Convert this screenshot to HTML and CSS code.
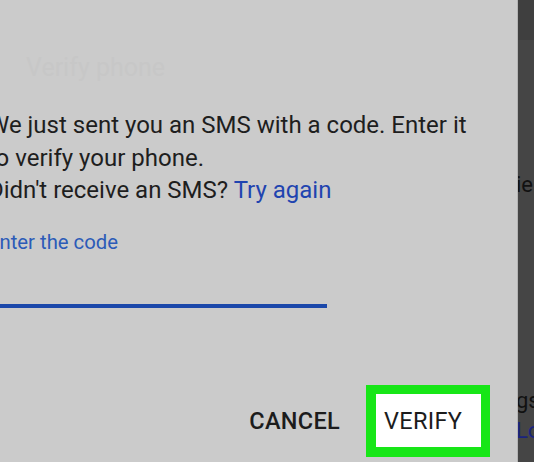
FILE: index.html
```html
<!DOCTYPE html>
<html lang="en">
<head>
  <meta charset="UTF-8" />
  <meta name="viewport" content="width=device-width, initial-scale=1" />
  <title>Verify phone</title>
  <link rel="stylesheet" href="styles.css">
</head>
<body>

<div class="screen">
  <div class="dialog">
    <div class="ghost-title">Verify phone</div>

    <div class="content">
      <p class="message">
        We just sent you an SMS with a code. Enter it<br>
        to verify your phone.<br>
        Didn't receive an SMS? <a class="link" href="#">Try again</a>
      </p>

      <label class="field-label" for="code">Enter the code</label>
      <input class="code-input" id="code" type="text" />
    </div>

    <div class="actions">
      <button class="btn">CANCEL</button>
      <div class="highlight">
        <button class="btn verify">VERIFY</button>
      </div>
    </div>
  </div>

  <div class="behind">
    <div class="behind-top"></div>
    <div class="behind-text one">ie</div>
    <div class="behind-text two">gs</div>
    <div class="behind-text three">Lo</div>
  </div>
</div>

</body>
</html>
```

FILE: styles.css
```css
body {
  margin: 0;
  font-family: Roboto, "Liberation Sans", sans-serif;
  background: #454545;
  overflow: hidden;
}

.screen {
  display: flex;
  width: 534px;
  height: 462px;
}

.dialog {
  width: 517px;
  flex-shrink: 0;
  background: #cbcbcb;
  border-right: 1px solid #b4b4b4;
  display: flex;
  flex-direction: column;
  overflow: hidden;
}

.ghost-title {
  margin: 54px 0 0 26px;
  height: 28px;
  font-size: 25px;
  line-height: 28px;
  color: #c7c7c7;
}

.content {
  margin-left: -12px;
}

.message {
  margin: 27px 0 0;
  font-size: 24px;
  line-height: 32.5px;
  color: #1e1e1e;
  white-space: nowrap;
}

.link {
  color: #1f44b0;
  text-decoration: none;
}

.field-label {
  display: block;
  margin-top: 24px;
  font-size: 20.3px;
  line-height: 22px;
  color: #2c5bb8;
}

.code-input {
  display: block;
  margin-top: 31px;
  width: 339px;
  height: 20px;
  padding: 0;
  background: transparent;
  border: none;
  border-bottom: 4px solid #1b48aa;
  outline: none;
}

.actions {
  display: flex;
  align-items: center;
  justify-content: flex-end;
  margin-top: auto;
  margin-bottom: 5px;
  padding-right: 27px;
  gap: 26px;
}

.btn {
  font-family: Roboto, "Liberation Sans", sans-serif;
  font-size: 23.5px;
  font-weight: 500;
  color: #1c1c1c;
  background: none;
  border: none;
  padding: 0;
  letter-spacing: 0.3px;
}

.verify {
  font-weight: 400;
}

.highlight {
  width: 97px;
  height: 53px;
  border: 10px solid #17e617;
  border-right-width: 9px;
  border-top-width: 9px;
  background: #ffffff;
  display: flex;
  align-items: center;
  padding-left: 8px;
  box-sizing: content-box;
}

.behind {
  flex: 1;
  display: flex;
  flex-direction: column;
  background: #454545;
  overflow: hidden;
}

.behind-top {
  height: 40px;
  background: #3f3f3f;
}

.behind-text {
  font-size: 22px;
  line-height: 26px;
  color: #111;
  white-space: nowrap;
  margin-left: -2px;
}

.one {
  margin-top: 132px;
}

.two {
  margin-top: 190px;
}

.three {
  margin-top: 4px;
  color: #1a237e;
}
```
